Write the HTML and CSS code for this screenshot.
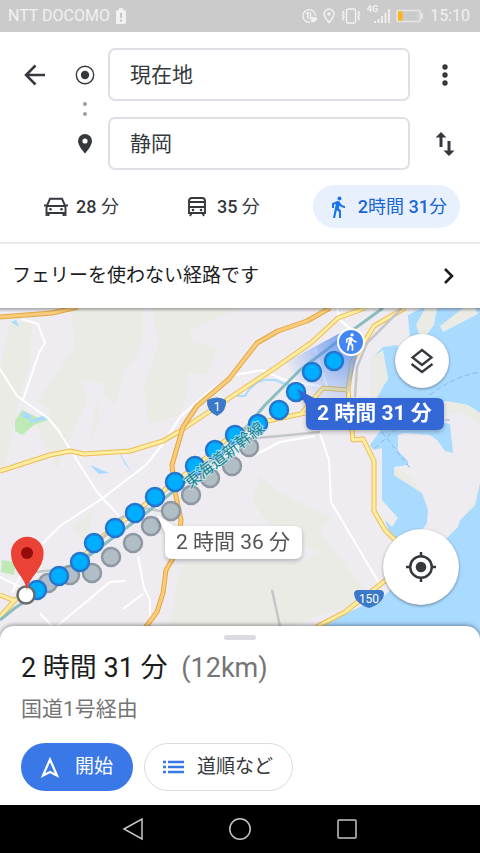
FILE: index.html
```html
<!DOCTYPE html>
<html lang="ja">

<head>
  <meta charset="UTF-8">
  <meta name="viewport" content="width=device-width, initial-scale=1.0">
  <title>現在地 → 静岡</title>
  <link rel="stylesheet" href="styles.css">
</head>

<body>

  <!-- Status bar -->
  <div class="status-bar">
    <span>NTT DOCOMO</span>
    <svg width="10" height="16" viewBox="0 0 10 16">
      <path d="M3 0h4v2h1.500q1.500 0 1.500 1.500v11q0 1.500-1.500 1.500h-7Q0 16 0 14.500v-11Q0 2 1.500 2H3z" fill="#f1f1f1"/>
      <path d="M5 5v5M5 11.500v2" stroke="#bbb" stroke-width="1.600"/>
    </svg>
    <div class="status-icons">
      <svg width="15" height="16" viewBox="0 0 15 16" fill="none" stroke="#f1f1f1" stroke-width="1.400">
        <path d="M13.500 8A6.300 6.300 0 1 0 8 14.200M4 6l2-1.500V11M8.500 4.500V11l2.500-2"/>
        <path d="M9 14c0-4 2-5 6-5 0 4-2 6-6 5z" fill="#f1f1f1" stroke="none"/>
      </svg>
      <svg width="12" height="16" viewBox="0 0 12 16" fill="none" stroke="#f1f1f1" stroke-width="1.500">
        <path d="M6 14.500C3 11 1 8.500 1 6a5 5 0 0 1 10 0c0 2.500-2 5-5 8.500z"/>
        <circle cx="6" cy="6" r="1" fill="#f1f1f1"/>
      </svg>
      <svg width="20" height="16" viewBox="0 0 20 16" fill="none" stroke="#f1f1f1" stroke-width="1.400">
        <rect x="5.500" y="1" width="9" height="14" rx="1.500"/>
        <path d="M3 3L1.500 4.500 3 6 1.500 7.500 3 9l-1.500 1.500L3 12M17 3l1.500 1.500L17 6l1.500 1.500L17 9l1.500 1.500L17 12"/>
      </svg>
      <span class="network">4G</span>
      <svg class="signal" width="16" height="16" viewBox="0 0 16 16" stroke="#f1f1f1" stroke-width="1.800">
        <path d="M1 15v-2M4.500 15v-4M8 15V8M11.500 15V5M15 15V1"/>
      </svg>
      <svg width="28" height="14" viewBox="0 0 28 14">
        <rect x="1" y="1.500" width="23" height="11" rx="1" fill="none" stroke="#e6e6e6" stroke-width="1.500"/>
        <rect x="2" y="2.500" width="4.500" height="9" fill="#fdb515"/>
        <path d="M26 4v6" stroke="#e6e6e6" stroke-width="2"/>
      </svg>
      <span>15:10</span>
    </div>
  </div>

  <!-- Search panel -->
  <header class="directions">
    <form class="places">
      <button class="icon-btn back" type="button" aria-label="戻る">
        <svg width="22" height="22" viewBox="0 0 22 22" fill="none" stroke="#35393d" stroke-width="2.500">
          <path d="M21 11H2M11.500 1.500L2 11l9.500 9.500"/>
        </svg>
      </button>
      <label class="mark" for="from" aria-label="出発地">
        <svg width="20" height="20" viewBox="0 0 20 20">
          <circle cx="10" cy="10" r="8.700" fill="none" stroke="#35393d" stroke-width="1.400"/>
          <circle cx="10" cy="10" r="4.200" fill="#35393d"/>
        </svg>
      </label>
      <input id="from" type="text" value="現在地">
      <button class="icon-btn" type="button" aria-label="メニュー">
        <svg width="6" height="22" viewBox="0 0 6 22" fill="#35393d">
          <circle cx="3" cy="3" r="2.700"/><circle cx="3" cy="11" r="2.700"/><circle cx="3" cy="19" r="2.700"/>
        </svg>
      </button>

      <div class="mark dots">
        <svg width="4" height="14" viewBox="0 0 4 14" fill="#9aa0a6">
          <circle cx="2" cy="2" r="2"/><circle cx="2" cy="12" r="2"/>
        </svg>
      </div>

      <label class="mark destination" for="to" aria-label="目的地">
        <svg width="14" height="20" viewBox="0 0 14 20">
          <path d="M7 0a7 7 0 0 0-7 7c0 5 7 12.500 7 12.500S14 12 14 7a7 7 0 0 0-7-7zm0 4.400a2.600 2.600 0 1 1 0 5.200 2.600 2.600 0 0 1 0-5.200z" fill="#35393d"/>
        </svg>
      </label>
      <input id="to" type="text" value="静岡">
      <button class="icon-btn" type="button" aria-label="入れ替え">
        <svg width="20" height="24" viewBox="0 0 20 24" fill="#35393d">
          <path d="M6 0l5.500 5.500h-4V15h-3V5.500h-4zM14 24l-5.500-5.500h4V9h3v9.500h4z"/>
        </svg>
      </button>
    </form>

    <nav class="modes">
      <button type="button">
        <svg width="24" height="20" viewBox="0 0 24 20" fill="none" stroke="#35393d" stroke-width="1.900">
          <path d="M3 8.500L6 1.800h12l3 6.700M2.500 19v-8.500l1-1.500h17l1 1.500V19M2.500 16h19M0 8.500h3M21 8.500h3M4.500 16v3M19.500 16v3"/>
          <circle cx="6.500" cy="12.300" r="1.300" fill="#35393d" stroke="none"/><circle cx="17.500" cy="12.300" r="1.300" fill="#35393d" stroke="none"/>
        </svg>
        <span><b>28</b> 分</span>
      </button>
      <button type="button">
        <svg width="24" height="20" viewBox="0 0 24 20" fill="none" stroke="#35393d" stroke-width="1.900">
          <path d="M4 16V4q0-3 3-3h10q3 0 3 3v12zM4 5h16M4 10h16M6.500 16l-1.500 3M17.500 16l1.500 3"/>
          <circle cx="8" cy="13" r="1.300" fill="#35393d" stroke="none"/><circle cx="16" cy="13" r="1.300" fill="#35393d" stroke="none"/>
        </svg>
        <span><b>35</b> 分</span>
      </button>
      <button class="selected" type="button">
        <svg width="24" height="24" viewBox="0 0 24 24" fill="#1a73e8">
          <path d="M13.500 5.500c1.100 0 2-.9 2-2s-.9-2-2-2-2 .9-2 2 .9 2 2 2zM9.800 8.900L7 23h2.100l1.800-8 2.100 2v6h2v-7.500l-2.100-2 .6-3C14.800 12 16.800 13 19 13v-2c-1.900 0-3.500-1-4.300-2.400l-1-1.600c-.4-.6-1-1-1.700-1-.3 0-.5.1-.8.1L6 8.300V13h2V9.600l1.800-.7"/>
        </svg>
        <span><b>2</b>時間 <b>31</b>分</span>
      </button>
    </nav>
  </header>

  <a class="notice" href="#">
    <span>フェリーを使わない経路です</span>
    <svg width="11" height="18" viewBox="0 0 11 18" fill="none" stroke="#1b1c1e" stroke-width="2.600">
      <path d="M2 2l7 7-7 7"/>
    </svg>
  </a>

  <!-- Map -->
  <main class="map">
    <svg class="map-canvas" viewBox="0 308 480 332" preserveAspectRatio="xMidYMin slice">
      <defs>
        <radialGradient id="beam" gradientUnits="userSpaceOnUse" cx="351" cy="342" r="70">
          <stop offset="0" stop-color="#4a84f0" stop-opacity=".8"/>
          <stop offset="1" stop-color="#4a84f0" stop-opacity="0"/>
        </radialGradient>
      </defs>

      <!-- hills -->
      <g fill="#ebebe5">
        <path d="M10 322L32 323 30 367 20 395 13 430 5 470H0V370z"/>
        <path d="M70 308H143V338L137 356 125 370 115 405 104 395V383L81 379 87 400 69 440 57 470 35 425 50 415 52 397 77 391 53 412 37 402 75 347z"/>
        <path d="M97 401L100 420 89 444z"/>
        <path d="M152 308H240L190 331 193 342 217 348 207 375 188 373 187 397 180 415 148 424 144 385 159 343z"/>
        <path d="M260 475L280 493 331 517 320 532 363 588 370 600 300 622 280 640H160L173 610 178 575 185 562H300L320 552 300 543 268 522 252 502z"/>
        <path d="M93 510L90 530 83 540 72 526z"/>
      </g>

      <!-- sea and coast -->
      <g fill="#a9daff">
        <path d="M422 308L408 315 410 340 418 360 405 365 397 345 383 347 372 358 388 380 371 400 385 412 380 431 370 445 373 450 382 448V500L398 518 392 527 385 520 390 535 400 545V580L385 595 320 626 300 640H480V308z"/>
        <path d="M11 322l5-2 3 7z"/>
        <path d="M115 445l15 25 5 7-10-13zM90 465l19 8-10 1z"/>
      </g>
      <path d="M480 413L468 405 445 401 425 408 400 425 404 433 398 435V451L408 461V465L394 467V475L422 493 428 510 427 523 418 536 410 560 447 538 458 527 460 520 475 505 480 483z" fill="#eeecf0"/>
      <path d="M425 308H437L434 325 422 341 416 325zM463 308H475L478 314 443 332 440 326zM371 358L383 350 388 378 377 398 371 398zM480 483L475 505 460 520 445 538 462 517 474 500zM445 401L468 405 480 413V425L462 412 445 416zM394 467L410 475 422 493 394 475z" fill="#ebebe5"/>
      <path d="M400 431L445 423 450 424 453 453 445 451 438 441 430 435 404 433z" fill="#a9daff"/>
      <path d="M430 395Q452 377 480 372M375 448l21-19M382 432l28 36M445 420h5" fill="none" stroke="#90b4e2" stroke-dasharray="5 3"/>
      <path d="M22 410L37 417 48 420 34 425 22 435 15 431V421z" fill="#bfeab5"/>
      <path d="M23 411l9 5-2 4-8-3zM29 421l13-5 6 3-17 4z" fill="#a9daff"/>
      <path d="M2 560l14 2-2 13-13-3z" fill="#bfeab5"/>
      <path d="M237 396h8q8-14 20-16h10l15 6" fill="none" stroke="#a9daff" stroke-width="2"/>

      <!-- minor roads -->
      <g fill="none" stroke="#fff" stroke-width="2" stroke-linejoin="round">
        <path d="M22 319L38 324 45 343 39 353 23 400M0 369L17 396 48 418 58 430 97 492 120 517M235 375L213 388 180 417 163 444 146 465 100 500 60 526 30 556 12 593"/>
        <path d="M235 375L262 370 285 380 330 388M315 348L320 365 328 388M337 308L340 320 352 330M320 434L329 460 331 502 379 583M255 455L280 442 315 436"/>
        <path d="M138 556L144 588 150 600V622M0 577L30 592M57 626L110 582 125 581M123 609L143 594M40 613L52 626"/>
      </g>

      <!-- main roads -->
      <g fill="none" stroke-linejoin="round">
        <g stroke="#eebb58" stroke-width="5">
          <path d="M0 471L50 455 70 451 84 454 130 451 163 441 180 431 240 391 275 368 312 342 338 318 365 308"/>
          <path d="M0 617L15 600 60 575 80 563 95 542 155 497 200 463 230 436 258 423 305 413M300 415L323 388 348 390 352 362 374 326 405 308M348 390L353 440 363 439 374 461V511L385 530 396 541M0 595L15 601"/>
          <path d="M300 638L320 625 345 612 386 580 400 568"/>
        </g>
        <g stroke="#feeea0" stroke-width="3">
          <path d="M0 471L50 455 70 451 84 454 130 451 163 441 180 431 240 391 275 368 312 342 338 318 365 308"/>
          <path d="M0 617L15 600 60 575 80 563 95 542 155 497 200 463 230 436 258 423 305 413M300 415L323 388 348 390 352 362 374 326 405 308M348 390L353 440 363 439 374 461V511L385 530 396 541M0 595L15 601"/>
          <path d="M300 638L320 625 345 612 386 580 400 568"/>
        </g>
        <path d="M0 317L52 313 78 307M330 308L307 321 278 331 257 343 229 379 197 406 183 427 172 465 174 487 181 520 178 550 166 570 163 593 157 612 145 628" stroke="#e5a547" stroke-width="5"/>
        <path d="M0 317L52 313 78 307M330 308L307 321 278 331 257 343 229 379 197 406 183 427 172 465 174 487 181 520 178 550 166 570 163 593 157 612 145 628" stroke="#f8cc78" stroke-width="3"/>
        <path d="M402 308L367 343 357 367 355 397M190 490L235 441 257 438 290 435 320 432M35 572L55 570 80 563 120 518 145 508 165 512M272 590L280 626" stroke="#c4c7ca" stroke-width="2.500"/>
        <path d="M0 620L15 608 50 585 150 510 200 470 240 435 265 405 300 370 350 332 383 308" stroke="#8bbdc0" stroke-width="3"/>
      </g>

      <path d="M342 332L286 362Q302 398 344 410L358 352z" fill="url(#beam)"/>

      <!-- alternative route -->
      <g fill="#b1bec6" stroke="#8e98a3" stroke-width="2.500">
        <circle cx="48" cy="583" r="9"/><circle cx="70" cy="575" r="9"/><circle cx="92" cy="573" r="9"/>
        <circle cx="111" cy="557" r="9"/><circle cx="133" cy="543" r="9"/><circle cx="151" cy="526" r="9"/>
        <circle cx="171" cy="511" r="9"/><circle cx="191" cy="495" r="9"/><circle cx="210" cy="478" r="9"/>
        <circle cx="232" cy="466" r="9"/><circle cx="249" cy="447" r="9"/>
      </g>

      <!-- selected route -->
      <g fill="#00aeff" stroke="#2375cd" stroke-width="2.500">
        <circle cx="37" cy="590" r="9"/><circle cx="59" cy="576" r="9"/><circle cx="80" cy="562" r="9"/>
        <circle cx="94" cy="543" r="9"/><circle cx="115" cy="528" r="9"/><circle cx="135" cy="513" r="9"/>
        <circle cx="155" cy="497" r="9"/><circle cx="175" cy="482" r="9"/><circle cx="195" cy="466" r="9"/>
        <circle cx="215" cy="450" r="9"/><circle cx="235" cy="435" r="9"/><circle cx="258" cy="424" r="9"/>
        <circle cx="279" cy="410" r="9"/><circle cx="296" cy="392" r="9"/><circle cx="312" cy="372" r="9"/>
        <circle cx="334" cy="361" r="9"/>
      </g>

      <text class="rail-name" transform="translate(190 489) rotate(-38)">東海道新幹線</text>

      <!-- route numbers -->
      <path d="M207 400q10-5 19 0 1 11-9 16-11-5-10-16z" fill="#3a78c9"/>
      <text class="road-no" x="217" y="411">1</text>
      <path d="M354 593q1-3 4-3h22q3 0 4 3 0 10-15 15-15-5-15-15z" fill="#3a78c9"/>
      <text class="road-no" x="369" y="603">150</text>

      <!-- current position -->
      <circle cx="351" cy="342" r="13" fill="#4285f4" stroke="#fff" stroke-width="2"/>
      <path transform="translate(341 332) scale(.82)" d="M13.500 5.500c1.100 0 2-.9 2-2s-.9-2-2-2-2 .9-2 2 .9 2 2 2zM9.800 8.900L7 23h2.100l1.800-8 2.100 2v6h2v-7.500l-2.100-2 .6-3C14.800 12 16.800 13 19 13v-2c-1.900 0-3.500-1-4.300-2.400l-1-1.600c-.4-.6-1-1-1.700-1-.3 0-.5.1-.8.1L6 8.300V13h2V9.600l1.800-.7" fill="#fff"/>

      <!-- goal -->
      <circle cx="26" cy="595" r="8.500" fill="#fff" stroke="#6b6b6b" stroke-width="2.500"/>
      <path d="M27 591C26 577 11 570 11 553a16.300 16.300 0 0 1 32.600 0C43.600 570 28 577 27 591z" fill="#ea4335"/>
      <circle cx="27" cy="553" r="6" fill="#930b0b"/>

      <!-- duration callouts -->
      <g class="callout alt">
        <path d="M157 515L174 526H295Q302 526 302 533V552Q302 559 295 559H172Q165 559 165 552V533z"/>
        <text x="176" y="549">2 時間 36 分</text>
      </g>
      <g class="callout">
        <path d="M297 389L314 398H437Q444 398 444 405V423Q444 430 437 430H313Q306 430 306 423V405z"/>
        <text x="317" y="420">2 時間 31 分</text>
      </g>
    </svg>

    <button class="fab layers" type="button" aria-label="レイヤ">
      <svg width="24" height="26" viewBox="0 0 24 26" fill="none" stroke="#35393d" stroke-width="2.300">
        <path d="M12 2l9.500 7.500L12 17 2.500 9.500zM1.500 16L12 24l10.500-8"/>
      </svg>
    </button>
    <button class="fab locate" type="button" aria-label="現在地を表示">
      <svg width="30" height="30" viewBox="0 0 30 30" fill="none" stroke="#35393d" stroke-width="2.500">
        <circle cx="15" cy="15" r="10.800"/>
        <path d="M15 0v5M15 25v5M0 15h5M25 15h5"/>
        <circle cx="15" cy="15" r="5.300" fill="#35393d" stroke="none"/>
      </svg>
    </button>
  </main>

  <!-- Route summary -->
  <section class="sheet">
    <div class="handle"></div>
    <h1>2 時間 31 分 <span>(12km)</span></h1>
    <p>国道1号経由</p>
    <div class="actions">
      <button class="start" type="button">
        <svg width="18" height="22" viewBox="0 0 18 22" fill="none" stroke="#fff" stroke-width="2.200">
          <path d="M9 3.500L2 19.500l7-3.500 7 3.500z"/>
        </svg>
        開始
      </button>
      <button class="steps" type="button">
        <svg width="21" height="14" viewBox="0 0 21 14" stroke="#3b78e7" stroke-width="2.400">
          <path d="M0 2h3M5 2h16M0 7h3M5 7h16M0 12h3M5 12h16"/>
        </svg>
        道順など
      </button>
    </div>
  </section>

  <!-- System buttons -->
  <footer class="system-nav">
    <button type="button" aria-label="戻る">
      <svg width="22" height="24" viewBox="0 0 22 24"><path d="M2 12L20 2v20z"/></svg>
    </button>
    <button type="button" aria-label="ホーム">
      <svg width="24" height="24" viewBox="0 0 24 24"><circle cx="12" cy="12" r="10.200"/></svg>
    </button>
    <button type="button" aria-label="アプリ履歴">
      <svg width="22" height="22" viewBox="0 0 22 22"><rect x="2" y="2" width="18" height="18" rx="1"/></svg>
    </button>
  </footer>

</body>

</html>
```
FILE: styles.css
```css
* {
  margin: 0;
  padding: 0;
  box-sizing: border-box;
}

body {
  display: flex;
  flex-direction: column;
  min-height: 100vh;
  background-color: #fff;
  color: #35393d;
  font-family: Roboto, "Noto Sans CJK JP", sans-serif;
  line-height: 24px;
}

button {
  border: none;
  background: none;
  color: inherit;
  font: inherit;
  cursor: pointer;
}

svg {
  display: block;
  flex-shrink: 0;
}

/* Status bar */
.status-bar {
  display: flex;
  align-items: center;
  gap: 6px;
  height: 32px;
  padding: 0 10px 0 8px;
  background-color: #cbcbcb;
  color: #f1f1f1;
  font-size: 16px;
}

.status-icons {
  display: flex;
  align-items: center;
  gap: 6px;
  margin-left: auto;
}

.network {
  align-self: flex-start;
  font-size: 9px;
  font-weight: bold;
  line-height: 10px;
}

.signal {
  margin-left: -10px;
}

/* Search panel */
.directions {
  padding: 16px 0 14px;
  border-bottom: 2px solid #e8eaed;
}

.places {
  display: grid;
  grid-template-columns: 70px 30px 1fr 70px;
  grid-template-rows: 53px 16px 53px;
}

.icon-btn,
.mark {
  display: flex;
  align-items: center;
  justify-content: center;
}

.dots {
  grid-row: 2;
  grid-column: 2;
}

.destination {
  grid-row: 3;
  grid-column: 2;
}

.destination ~ * {
  grid-row: 3;
}

.places input {
  grid-column: 3;
  min-width: 0;
  margin-left: 8px;
  padding: 0 20px 4px;
  border: 2px solid #dfe0e6;
  border-radius: 7px;
  background-color: #fff;
  color: #35393d;
  font-family: inherit;
  font-size: 21px;
  outline: none;
}

.places input:focus {
  border-color: #1a73e8;
}

.places input + .icon-btn {
  grid-column: 4;
}

.modes {
  display: flex;
  justify-content: space-between;
  padding: 15px 20px 0 31px;
}

.modes button {
  display: flex;
  align-items: center;
  gap: 8px;
  height: 43px;
  padding: 0 13px;
  border-radius: 22px;
  font-size: 18px;
}

.modes b {
  font-weight: 500;
}

.modes .selected {
  background-color: #e8f0fe;
  color: #1967d2;
}

.notice {
  display: flex;
  align-items: center;
  justify-content: space-between;
  height: 64px;
  padding: 0 26px 0 12px;
  color: #1b1c1e;
  font-size: 19px;
  text-decoration: none;
}

/* Map */
.map {
  position: relative;
  z-index: 0;
  flex: 1;
  min-height: 240px;
  overflow: hidden;
  background-color: #eeecf0;
}

.map::after {
  content: "";
  position: absolute;
  top: 0;
  width: 100%;
  height: 4px;
  background: linear-gradient(rgba(0, 0, 0, 0.3), transparent);
}

.map-canvas {
  position: absolute;
  width: 100%;
  height: 100%;
}

.rail-name {
  fill: #178594;
  stroke: #d9f1f5;
  stroke-opacity: 0.7;
  stroke-width: 2px;
  paint-order: stroke;
  font-size: 16px;
}

.road-no {
  fill: #fff;
  font-size: 12px;
  text-anchor: middle;
}

.callout {
  filter: drop-shadow(0 2px 2px rgba(0, 0, 0, 0.25));
}

.callout path {
  fill: #3367d6;
}

.callout text {
  fill: #fff;
  font-size: 21px;
  font-weight: bold;
}

.callout.alt path {
  fill: #fff;
}

.callout.alt text {
  fill: #555;
  font-weight: normal;
}

.fab {
  position: absolute;
  display: flex;
  align-items: center;
  justify-content: center;
  border-radius: 50%;
  background-color: #fff;
  box-shadow: 0 1px 3px rgba(0, 0, 0, 0.4);
}

.layers {
  top: 26px;
  right: 31px;
  width: 54px;
  height: 54px;
}

.locate {
  right: 21px;
  bottom: 35px;
  width: 76px;
  height: 76px;
}

/* Route summary */
.sheet {
  position: relative;
  z-index: 1;
  margin-top: -14px;
  padding: 9px 21px 14px;
  border-radius: 14px 14px 0 0;
  background-color: #fff;
  box-shadow: 0 -1px 4px rgba(0, 0, 0, 0.4);
}

.handle {
  width: 32px;
  height: 5px;
  margin: 0 auto 8px;
  border-radius: 3px;
  background-color: #dadce0;
}

.sheet h1 {
  color: #1b1c1e;
  font-size: 27px;
  font-weight: normal;
  line-height: 40px;
}

.sheet h1 span {
  margin-left: 7px;
  color: #757575;
}

.sheet p {
  margin-bottom: 13px;
  color: #757575;
  font-size: 21px;
  line-height: 42px;
}

.actions {
  display: flex;
  gap: 11px;
}

.actions button {
  display: flex;
  align-items: center;
  height: 48px;
  border-radius: 24px;
  font-size: 19px;
}

.actions .start {
  gap: 16px;
  padding: 0 20px;
  background-color: #3b78e7;
  color: #fff;
}

.actions .steps {
  gap: 13px;
  padding: 0 19px 0 18px;
  border: 1px solid #dadce0;
}

/* System buttons */
.system-nav {
  display: flex;
  justify-content: space-around;
  height: 48px;
  padding: 0 80px;
  background-color: #000;
}

.system-nav button {
  display: flex;
  align-items: center;
}

.system-nav svg {
  fill: none;
  stroke: #c6c6c6;
  stroke-width: 1.5px;
}
```
